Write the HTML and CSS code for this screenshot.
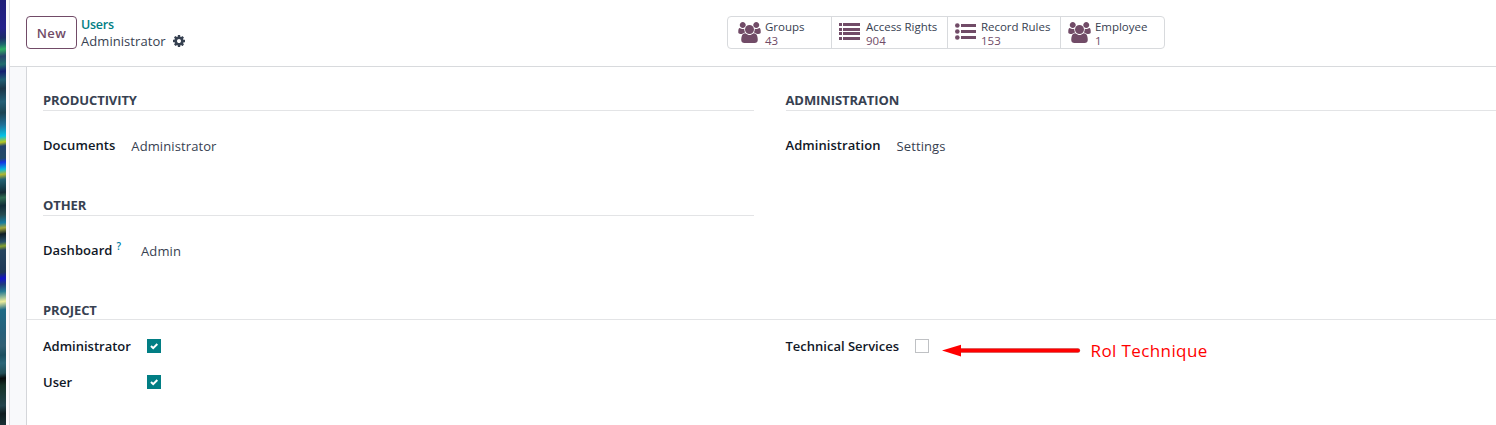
FILE: index.html
```html
<!DOCTYPE html>
<html lang="en">
<head>
<meta charset="utf-8">
<title>Administrator</title>
<link rel="stylesheet" href="styles.css">
</head>
<body>
<svg width="0" height="0" class="defs">
  <symbol id="users" viewBox="0 0 1920 1792"><path d="M593 896q-162 5-265 128h-134q-82 0-138-40.500t-56-118.500q0-353 124-353 6 0 43.500 21t97.500 42.500 119 21.500q67 0 133-23-5 37-5 66 0 139 81 256zm1071 637q0 120-73 189.500t-194 69.500h-874q-121 0-194-69.500t-73-189.500q0-53 3.500-103.500t14-109 26.500-108.500 43-97.500 62-81 85.500-53.500 111.500-20q10 0 43 21.500t73 48 107 48 135 21.500 135-21.500 107-48 73-48 43-21.500q61 0 111.500 20t85.500 53.500 62 81 43 97.500 26.500 108.500 14 109 3.500 103.500zm-1024-1277q0 106-75 181t-181 75-181-75-75-181 75-181 181-75 181 75 75 181zm704 384q0 159-112.500 271.500t-271.500 112.500-271.500-112.500-112.500-271.500 112.500-271.500 271.500-112.500 271.500 112.500 112.500 271.500zm576 225q0 78-56 118.500t-138 40.500h-134q-103-123-265-128 81-117 81-256 0-29-5-66 66 23 133 23 59 0 119-21.500t97.500-42.500 43.500-21q124 0 124 353zm-128-609q0 106-75 181t-181 75-181-75-75-181 75-181 181-75 181 75 75 181z"/></symbol>
  <symbol id="check" viewBox="0 0 14 14"><path d="M4 7l2.200 2.200L10.300 5" fill="none" stroke="#fff" stroke-width="2"/></symbol>
</svg>
<div class="desktop"></div>
<div class="window">
  <header class="control-panel">
    <button class="new">New</button>
    <div class="breadcrumb">
      <a class="crumb">Users</a>
      <div class="current"><span>Administrator</span>
        <svg class="cog" viewBox="128 128 1536 1536"><path d="M1152 896q0-106-75-181t-181-75-181 75-75 181 75 181 181 75 181-75 75-181zm512-109v222q0 12-8 23t-20 13l-185 28q-19 54-39 91 35 50 107 138 10 12 10 25t-9 23q-27 37-99 108t-94 71q-12 0-26-9l-138-108q-44 23-91 38-16 136-29 186-7 28-36 28h-222q-14 0-24.500-8.500t-11.500-21.500l-28-184q-49-16-90-37l-141 107q-10 9-25 9-14 0-25-11-126-114-165-168-7-10-7-23 0-12 8-23 15-21 51-66.500t54-70.500q-27-50-41-99l-183-27q-13-2-21-12.500t-8-23.500v-222q0-12 8-23t19-13l186-28q14-46 39-92-40-57-107-138-10-12-10-24 0-10 9-23 26-36 98.500-107.500t94.500-71.500q13 0 26 10l138 107q44-23 91-38 16-136 29-186 7-28 36-28h222q14 0 24.500 8.500t11.500 21.500l28 184q49 16 90 37l142-107q9-9 24-9 13 0 25 10 129 119 165 170 7 8 7 22 0 12-8 23-15 21-51 66.500t-54 70.500q26 50 41 98l183 28q13 2 21 12.500t8 23.500z"/></svg>
      </div>
    </div>
    <nav class="stats">
      <div class="stat groups"><svg class="icon users"><use href="#users"/></svg><div><div class="label">Groups</div><div class="count">43</div></div></div>
      <div class="stat rights"><svg class="icon" viewBox="0 0 21 18"><path d="M0 0h3v3H0zM4 0h17v3H4zM0 5h3v3H0zM4 5h17v3H4zM0 9h3v3H0zM4 9h17v3H4zM0 14h3v3H0zM4 14h17v3H4z"/></svg><div><div class="label">Access Rights</div><div class="count">904</div></div></div>
      <div class="stat rules"><svg class="icon" viewBox="0 0 21 18"><circle cx="2.300" cy="2.500" r="2.300"/><circle cx="2.300" cy="8.500" r="2.300"/><circle cx="2.300" cy="14.500" r="2.300"/><path d="M6 1h15v3H6zM6 7h15v3H6zM6 13h15v3H6z"/></svg><div><div class="label">Record Rules</div><div class="count">153</div></div></div>
      <div class="stat employee"><svg class="icon users"><use href="#users"/></svg><div><div class="label">Employee</div><div class="count">1</div></div></div>
    </nav>
  </header>
  <main class="content">
    <div class="sheet">
      <div class="groups-grid">
        <section class="group">
          <h2>PRODUCTIVITY</h2>
          <div class="field"><label>Documents</label><span class="value">Administrator</span></div>
        </section>
        <section class="group">
          <h2>ADMINISTRATION</h2>
          <div class="field"><label>Administration</label><span class="value">Settings</span></div>
        </section>
        <section class="group">
          <h2>OTHER</h2>
          <div class="field"><label>Dashboard</label><sup class="help">?</sup><span class="value">Admin</span></div>
        </section>
      </div>
      <section class="project">
        <h2>PROJECT</h2>
        <div class="options">
          <div class="option"><label class="opt-label">Administrator</label><svg class="box"><use href="#check"/></svg></div>
          <div class="option"><label class="opt-label wide">Technical Services</label><span class="box empty"></span>
            <svg class="arrow" width="140" height="14" viewBox="0 0 140 14"><path d="M17 6.500H136" stroke="#aaa" stroke-width="4.400" stroke-linecap="round"/><path d="M17 6.500H136" stroke="#f00" stroke-width="3.800" stroke-linecap="round"/><path d="M0 6.500L19 .8V12.400z" fill="#f00"/></svg>
            <span class="note">Rol Technique</span></div>
          <div class="option"><label class="opt-label">User</label><svg class="box"><use href="#check"/></svg></div>
        </div>
      </section>
    </div>
  </main>
</div>
</body>
</html>
```
FILE: styles.css
```css
* { box-sizing: border-box; }
body { margin: 0; width: 1496px; height: 425px; display: flex; overflow: hidden; background: #fdf9fb; color: #374151; font: 13px/20px "Open Sans", "Noto Sans", sans-serif; white-space: nowrap; }
.defs { position: absolute; }
.desktop { flex: none; width: 6px; margin-right: 3px; background: linear-gradient(172deg, #211e78 0, #26208b 28px, #1c2c68 38px, #1d656d 44px, #2fae65 49px, #26446c 56px, #206c6d 64px, #151f70 71px, #215d73 79px, #1c3547 88px, #245e75 101px, #1c4353 112px, #217097 124px, #05c2e6 135px, #b8c820 141px, #24436d 145px, #244b65 157px, #1634e0 161px, #08b8de 168px, #b1b62e 173px, #236172 178px, #17404c 186px, #142a33 191px, #306b50 196px, #112c38 204px, #264b50 213px, #187ca1 221px, #a3a73d 226px, #101d24 232px, #28516a 240px, #86a12f 244px, #27435e 248px, #203757 270px, #1414c7 276px, #213c7b 282px, #277b95 289px, #ecec9b 299px, #206b86 307px, #285f7a 330px, #315e73 343px, #1d4f60 352px, #2b6477 360px, #234d55 370px, #070a0b 375px, #163126 382px, #24444d 402px, #101d21 410px, #1c393d 425px); }
.window { flex: 1; min-width: 0; display: flex; flex-direction: column; border-left: 1px solid #dedee2; background: #fff; }
.control-panel { height: 67px; border-bottom: 1px solid #d8dadd; display: flex; align-items: flex-start; padding: 16px 0 0 16px; }
.new { width: 51px; height: 33px; padding: 0; border: 1px solid #714b67; border-radius: 4px; background: #fff; color: #714b67; font: 600 13px "Open Sans", sans-serif; letter-spacing: .4px; }
.breadcrumb { width: 646px; padding: 0 0 0 4px; line-height: 17px; }
.crumb { display: block; color: #017e84; font-size: 12.500px; font-weight: 600; letter-spacing: -.25px; }
.current { display: flex; align-items: center; gap: 7px; letter-spacing: .06px; }
.cog { width: 12px; height: 12px; margin-top: -1px; fill: #374151; }
.stats { margin-left: 4px; display: flex; height: 33px; border: 1px solid #d8dadd; border-radius: 4px; font-size: 11.500px; line-height: 14px; }
.stat { display: flex; padding: 3px 0 0 10px; gap: 4px; }
.stat + .stat { border-left: 1px solid #d8dadd; padding-left: 7px; }
.stat.rights { gap: 6px; }
.stat.rules { gap: 5px; }
.icon { width: 21px; height: 18px; margin-top: 3px; fill: #714b67; }
.icon.users { width: 23px; margin-top: 2px; height: 21px; }
.groups { width: 103px; } .rights { width: 116px; } .rules { width: 113px; } .employee { width: 104px; }
.label { letter-spacing: -.03px; }
.count { color: #714b67; font-size: 11.500px; }
.content { flex: 1; padding-left: 16px; background: #f8f9fb; }
.sheet { height: 100%; border-left: 1px solid #d4d6da; background: #fff; padding-top: 24px; }
.groups-grid { display: grid; grid-template-columns: 711px 711px; column-gap: 31.500px; padding-left: 16px; grid-auto-rows: 105px; }
h2 { margin: 0; height: 20px; border-bottom: 1px solid #e3e4e6; font-size: 13px; line-height: 18px; font-weight: 700; letter-spacing: -.1px; }
.field { display: flex; padding-top: 24px; }
label { color: #111827; font-weight: 600; letter-spacing: .06px; }
.value { margin: 1px 0 0 16px; letter-spacing: .1px; }
.help { color: #0180a5; font-size: 10px; font-weight: 600; line-height: 12px; margin-left: 4px; }
.help + .value { margin-left: 20px; }
.project h2 { height: 19px; padding-left: 16px; }
.options { display: grid; grid-template-columns: 711px 711px; column-gap: 31.500px; grid-auto-rows: 36px; padding: 16px 0 0 16px; }
.option { display: flex; align-items: flex-start; height: 20px; }
.opt-label { width: 104px; letter-spacing: 0; }
.opt-label.wide { width: 129px; }
.box { width: 14px; height: 14px; margin-top: 3px; background: #017e84; }
.empty { background: #fff; border: 1px solid #bfc1c4; }
.arrow { margin: 8px 0 0 13px; }
.note { color: #f00; font-size: 17px; line-height: 24px; letter-spacing: .4px; margin: 3px 0 0 9px; }
```
